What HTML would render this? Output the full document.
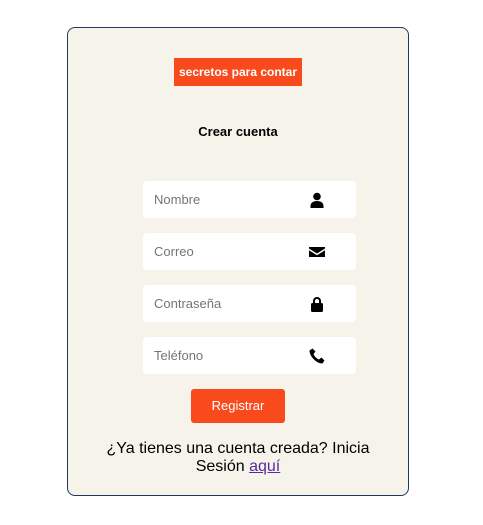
<!DOCTYPE html>
<html><head><style>
body{margin:0;background:#fff;font-family:"Liberation Sans",sans-serif;}
.card{position:absolute;left:67px;top:27px;width:340px;height:467px;border:1px solid #1f3a5f;border-radius:8px;background:#f6f3eb;}
.logo{position:absolute;left:174px;top:58px;width:128px;height:28px;background:#f84a1c;color:#fff;font-size:12px;font-weight:bold;font-family:"Liberation Sans",sans-serif;text-align:center;line-height:28px;white-space:nowrap}
.t{position:absolute;left:67px;width:342px;top:124px;text-align:center;font-weight:bold;font-size:13px}
.in{position:absolute;left:143px;width:213px;height:37px;background:#fff;border-radius:4px;font-size:13px;color:#757575;line-height:37px;box-sizing:border-box;padding-left:11px}
.in svg{position:absolute;left:166px;top:11px}
.btn{position:absolute;left:191px;top:389px;width:94px;height:34px;background:#f84a1c;border-radius:3px;color:#fff;font-size:13px;text-align:center;line-height:34px}
.f{position:absolute;left:67px;width:342px;top:440px;text-align:center;font-size:16px;line-height:18px;color:#000}
a{color:#5a2a9c}
</style></head><body>
<div class="card"></div>
<div class="logo">secretos para contar</div>
<div class="t">Crear cuenta</div>
<div class="in" style="top:181px">Nombre<svg width="16" height="16" viewBox="0 0 16 16"><circle cx="8" cy="4.5" r="3.8"/><path d="M1.5 16v-2c0-3 2.5-5 6.5-5s6.5 2 6.5 5v2z"/></svg></div>
<div class="in" style="top:233px">Correo<svg width="16" height="16" viewBox="0 0 16 16"><path d="M0 3h16v1.5L8 9.5 0 4.5zM0 6.3l8 5 8-5V13H0z"/></svg></div>
<div class="in" style="top:285px">Contraseña<svg width="16" height="16" viewBox="0 0 16 16"><path d="M4 7V5a4 4 0 0 1 8 0v2h-2V5a2 2 0 0 0-4 0v2z"/><rect x="2" y="7" width="12" height="9" rx="1.5"/></svg></div>
<div class="in" style="top:337px">Teléfono<svg width="16" height="16" viewBox="0 0 16 16"><path d="M3.5 0.5l3 3-2 2.5c1 2.5 3 4.5 5.5 5.5l2.5-2 3 3-2 3c-6 0-13-7-13-13z"/></svg></div>
<div class="btn">Registrar</div>
<div class="f">¿Ya tienes una cuenta creada? Inicia<br>Sesión <a href="#">aquí</a></div>
</body></html>
